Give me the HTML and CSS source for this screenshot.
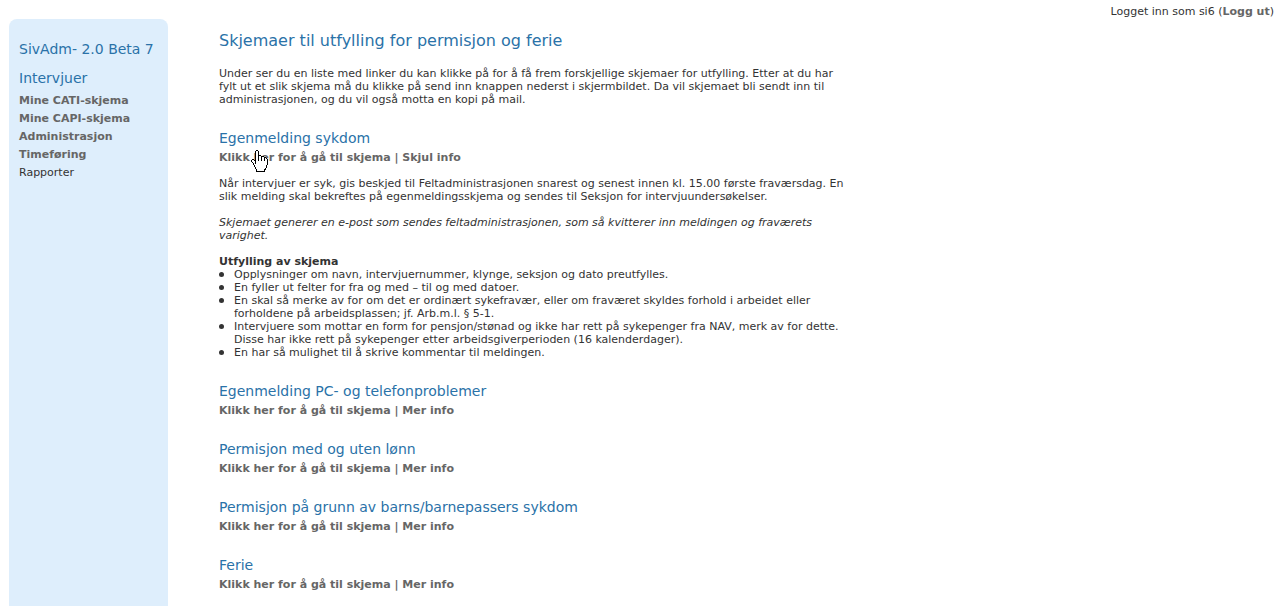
FILE: index.html
```
<!DOCTYPE html>
<html lang="no">
<head>
<meta charset="utf-8">
<title>SivAdm</title>
<link rel="stylesheet" href="styles.css">
</head>
<body>
<header class="login">Logget inn som si6 (<a href="#">Logg ut</a>)</header>
<div class="layout">
  <nav class="sidebar">
    <h2>SivAdm- 2.0 Beta 7</h2>
    <h2>Intervjuer</h2>
    <ul class="menu">
      <li><a href="#">Mine CATI-skjema</a></li>
      <li><a href="#">Mine CAPI-skjema</a></li>
      <li><a href="#">Administrasjon</a></li>
      <li><a href="#">Timeføring</a></li>
      <li>Rapporter</li>
    </ul>
  </nav>
  <main class="content">
    <h1>Skjemaer til utfylling for permisjon og ferie</h1>
    <p>Under ser du en liste med linker du kan klikke på for å få frem forskjellige skjemaer for utfylling. Etter at du har<br>fylt ut et slik skjema må du klikke på send inn knappen nederst i skjermbildet. Da vil skjemaet bli sendt inn til<br>administrasjonen, og du vil også motta en kopi på mail.</p>
    <section>
      <h2>Egenmelding sykdom</h2>
      <div class="links"><a href="#">Klikk her for å gå til skjema</a> | <a href="#">Skjul info</a>
        <svg class="pointer" width="17" height="22" viewBox="0 0 17 22" shape-rendering="crispEdges" aria-hidden="true">
          <path fill="#fff" d="M5 1H7V6H10V7H13V8H15V9H16V15H15V18H14V21H5V18H4V16H3V14H2V12H1V10H3V11H5Z"/>
          <path fill="#000" d="M5 0h2v1h-2zM4 1h1v13h-1zM7 1h1v10h-1zM8 5h2v1h-2zM10 6h1v5h-1zM11 6h2v1h-2zM13 7h1v4h-1zM14 7h1v1h-1zM15 8h1v1h-1zM16 9h1v6h-1zM15 15h1v3h-1zM14 18h1v2h-1zM13 19h1v3h-1zM5 21h8v1h-8zM5 19h1v2h-1zM4 17h1v2h-1zM3 15h1v2h-1zM2 13h1v2h-1zM1 12h1v1h-1zM0 10h1v2h-1zM1 9h2v1h-2zM3 10h1v1h-1z"/>
        </svg>
      </div>
      <div class="info">
        <p>Når intervjuer er syk, gis beskjed til Feltadministrasjonen snarest og senest innen kl. 15.00 første fraværsdag. En<br>slik melding skal bekreftes på egenmeldingsskjema og sendes til Seksjon for intervjuundersøkelser.</p>
        <p><em>Skjemaet generer en e-post som sendes feltadministrasjonen, som så kvitterer inn meldingen og fraværets<br>varighet.</em></p>
        <div>
          <h3>Utfylling av skjema</h3>
          <ul class="steps">
            <li>Opplysninger om navn, intervjuernummer, klynge, seksjon og dato preutfylles.</li>
            <li>En fyller ut felter for fra og med – til og med datoer.</li>
            <li>En skal så merke av for om det er ordinært sykefravær, eller om fraværet skyldes forhold i arbeidet eller<br>forholdene på arbeidsplassen; jf. Arb.m.l. § 5-1.</li>
            <li>Intervjuere som mottar en form for pensjon/stønad og ikke har rett på sykepenger fra NAV, merk av for dette.<br>Disse har ikke rett på sykepenger etter arbeidsgiverperioden (16 kalenderdager).</li>
            <li>En har så mulighet til å skrive kommentar til meldingen.</li>
          </ul>
        </div>
      </div>
    </section>
    <section>
      <h2>Egenmelding PC- og telefonproblemer</h2>
      <div class="links"><a href="#">Klikk her for å gå til skjema</a> | <a href="#">Mer info</a></div>
    </section>
    <section>
      <h2>Permisjon med og uten lønn</h2>
      <div class="links"><a href="#">Klikk her for å gå til skjema</a> | <a href="#">Mer info</a></div>
    </section>
    <section>
      <h2>Permisjon på grunn av barns/barnepassers sykdom</h2>
      <div class="links"><a href="#">Klikk her for å gå til skjema</a> | <a href="#">Mer info</a></div>
    </section>
    <section>
      <h2>Ferie</h2>
      <div class="links"><a href="#">Klikk her for å gå til skjema</a> | <a href="#">Mer info</a></div>
    </section>
  </main>
</div>
</body>
</html>
```

FILE: styles.css
```
* {
  box-sizing: border-box;
}

body {
  margin: 0;
  min-height: 100vh;
  display: flex;
  flex-direction: column;
  background: #fff;
  color: #333;
  font: 11px/13px Verdana, "DejaVu Sans", sans-serif;
}

h1, h2, h3, p, ul {
  margin: 0;
  padding: 0;
}

ul {
  list-style: none;
}

h1, h2 {
  color: #2a72a8;
  font-weight: normal;
}

h1 {
  font-size: 16px;
  line-height: 20px;
  margin-bottom: 16px;
}

h2 {
  font-size: 14px;
  line-height: 18px;
}

h3 {
  font-size: 11px;
  line-height: 13px;
}

a {
  color: #666;
  font-weight: bold;
  text-decoration: none;
}

a:hover {
  text-decoration: underline;
}

.login {
  padding: 5px 7px 1px;
  text-align: right;
}

.layout {
  flex: 1;
  display: flex;
  align-items: stretch;
  gap: 51px;
  padding-left: 9px;
}

.sidebar {
  flex: none;
  min-width: 159px;
  padding: 21px 10px;
  border-radius: 8px 8px 0 0;
  background: #deeefc;
  white-space: nowrap;
}

.sidebar h2 + h2 {
  margin-top: 11px;
}

.menu {
  margin-top: 5px;
  line-height: 18px;
}

.content {
  flex: 1;
  padding: 12px 8px 15px 0;
}

section {
  margin-top: 23px;
}

.links {
  position: relative;
  margin-top: 4px;
  color: #666;
  font-weight: bold;
}

.pointer {
  position: absolute;
  top: -1px;
  left: 32px;
}

.info {
  display: flex;
  flex-direction: column;
  gap: 13px;
  margin-top: 13px;
}

.steps li {
  position: relative;
  padding-left: 15px;
}

.steps li::before {
  content: "";
  position: absolute;
  top: 4px;
  left: 0;
  width: 5px;
  height: 5px;
  border-radius: 50%;
  background: #333;
}
```
